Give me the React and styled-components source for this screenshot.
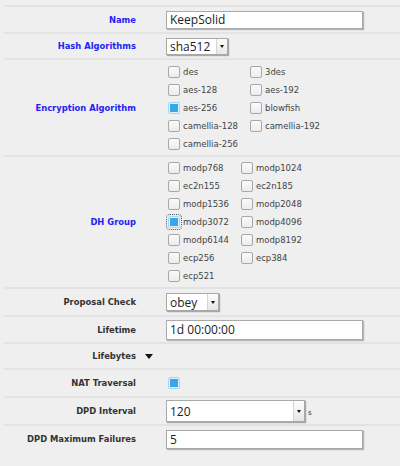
import React from "react";
import styled, { createGlobalStyle } from "styled-components";

const GlobalStyle = createGlobalStyle`
  html, body {
    margin: 0;
    padding: 0;
    background: #efefef;
  }
`;

const Form = styled.div`
  padding: 5px 0 0 4px;
  width: 396px;
  font-family: "DejaVu Sans", Verdana, sans-serif;
`;

const Row = styled.div`
  display: grid;
  grid-template-columns: 132px 30px 1fr;
  align-items: center;
  box-sizing: border-box;
  height: ${(p) => p.$h}px;
  border-top: 2px solid #e3e3e3;
`;

const Label = styled.div`
  text-align: right;
  font-weight: bold;
  font-size: 8.4px;
  color: ${(p) => (p.$req ? "#2323f5" : "#333")};
`;

const Toggle = styled.div`
  display: flex;
  justify-content: center;
  align-items: center;
  padding-right: 4px;
`;

const Arrow = styled.span`
  width: 0;
  height: 0;
  border-left: 4px solid transparent;
  border-right: 4px solid transparent;
  border-top: 5px solid #111;
`;

const Value = styled.div`
  display: flex;
  align-items: center;
`;

const TextInput = styled.div`
  box-sizing: border-box;
  width: 197px;
  height: ${(p) => p.$h || 19}px;
  background: #fff;
  border: 1px solid #a9a9a9;
  box-shadow: 1px 1px 1px rgba(0, 0, 0, 0.25);
  padding: 0 3px;
  display: flex;
  align-items: center;
  font-family: "Open Sans", "Noto Sans", sans-serif;
  font-size: 12px;
  color: #222;
`;

const Select = styled.div`
  box-sizing: border-box;
  width: ${(p) => p.$w}px;
  height: ${(p) => p.$h || 17}px;
  background: #fff;
  border: 1px solid #a9a9a9;
  box-shadow: 1px 1px 1px rgba(0, 0, 0, 0.3);
  display: flex;
  font-family: "Open Sans", "Noto Sans", sans-serif;
  font-size: 12px;
  color: #222;
`;

const SelectText = styled.div`
  flex: 1;
  display: flex;
  align-items: center;
  padding-left: 3px;
`;

const SelectButton = styled.div`
  width: 10px;
  border-left: 1px solid #d4d4d4;
  background: linear-gradient(#fdfdfd, #e6e6e6);
  display: flex;
  align-items: center;
  justify-content: center;
`;

const SmallArrow = styled.span`
  width: 0;
  height: 0;
  border-left: 2.5px solid transparent;
  border-right: 2.5px solid transparent;
  border-top: 3px solid #111;
`;

const Unit = styled.span`
  font-size: 7px;
  color: #333;
  margin-left: 3px;
  margin-top: 4px;
`;

const Options = styled.div`
  display: grid;
  grid-template-columns: auto auto;
  justify-content: start;
  padding-left: 2px;
`;

const Option = styled.label`
  display: flex;
  align-items: center;
  height: 18px;
  padding-right: 12px;
  font-size: 8.5px;
  color: #444;
`;

const Box = styled.span`
  position: relative;
  box-sizing: border-box;
  width: 12px;
  height: 12px;
  margin-right: 3px;
  border-radius: 2px;
  border: 1px solid ${(p) => (p.$on ? "#a9d7f0" : "#a8a8a8")};
  background: ${(p) =>
    p.$on ? "#dff1fb" : "linear-gradient(#fafafa, #ececec)"};
  outline: ${(p) => (p.$focus ? "1px dotted #555" : "none")};
  outline-offset: 1px;
  &::after {
    content: "";
    display: ${(p) => (p.$on ? "block" : "none")};
    position: absolute;
    left: 1px;
    top: 1px;
    width: 8px;
    height: 8px;
    background: #39a7e6;
  }
`;

const Check = ({ label, on, focus }) => (
  <Option>
    <Box $on={on} $focus={focus} />
    {label}
  </Option>
);

const encryption = [
  ["des"], ["3des"],
  ["aes-128"], ["aes-192"],
  ["aes-256", true], ["blowfish"],
  ["camellia-128"], ["camellia-192"],
  ["camellia-256"],
];

const dhGroups = [
  ["modp768"], ["modp1024"],
  ["ec2n155"], ["ec2n185"],
  ["modp1536"], ["modp2048"],
  ["modp3072", true, true], ["modp4096"],
  ["modp6144"], ["modp8192"],
  ["ecp256"], ["ecp384"],
  ["ecp521"],
];

const Dropdown = ({ value, w, h }) => (
  <Select $w={w} $h={h}>
    <SelectText>{value}</SelectText>
    <SelectButton>
      <SmallArrow />
    </SelectButton>
  </Select>
);

export default function App() {
  return (
    <Form>
      <GlobalStyle />
      <Row $h={27}>
        <Label $req>Name</Label>
        <Toggle />
        <Value>
          <TextInput $h={18}>KeepSolid</TextInput>
        </Value>
      </Row>
      <Row $h={26}>
        <Label $req>Hash Algorithms</Label>
        <Toggle />
        <Value>
          <Dropdown value="sha512" w={62} />
        </Value>
      </Row>
      <Row $h={97}>
        <Label $req>Encryption Algorithm</Label>
        <Toggle />
        <Options>
          {encryption.map(([l, on]) => (
            <Check key={l} label={l} on={on} />
          ))}
        </Options>
      </Row>
      <Row $h={132}>
        <Label $req>DH Group</Label>
        <Toggle />
        <Options>
          {dhGroups.map(([l, on, focus]) => (
            <Check key={l} label={l} on={on} focus={focus} />
          ))}
        </Options>
      </Row>
      <Row $h={28}>
        <Label>Proposal Check</Label>
        <Toggle />
        <Value>
          <Dropdown value="obey" w={53} h={18} />
        </Value>
      </Row>
      <Row $h={27}>
        <Label>Lifetime</Label>
        <Toggle />
        <Value>
          <TextInput $h={20}>1d 00:00:00</TextInput>
        </Value>
      </Row>
      <Row $h={26}>
        <Label>Lifebytes</Label>
        <Toggle>
          <Arrow />
        </Toggle>
        <Value />
      </Row>
      <Row $h={28}>
        <Label>NAT Traversal</Label>
        <Toggle />
        <Options>
          <Check label="" on />
        </Options>
      </Row>
      <Row $h={28}>
        <Label>DPD Interval</Label>
        <Toggle />
        <Value>
          <Dropdown value="120" w={139} h={22} />
          <Unit>s</Unit>
        </Value>
      </Row>
      <Row $h={28}>
        <Label>DPD Maximum Failures</Label>
        <Toggle />
        <Value>
          <TextInput>5</TextInput>
        </Value>
      </Row>
    </Form>
  );
}
